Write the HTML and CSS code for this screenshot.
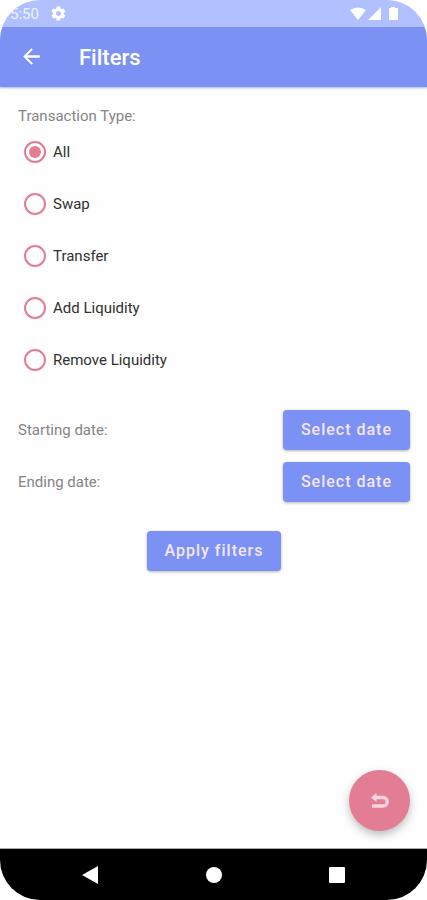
FILE: index.html
```html
<!DOCTYPE html>
<html lang="en">
<head>
<meta charset="utf-8">
<meta name="viewport" content="width=device-width, initial-scale=1">
<title>Filters</title>
<link rel="stylesheet" href="styles.css">
</head>
<body>
<div class="screen">
  <div class="status">
    <span class="time">5:50</span>
    <svg class="gear" viewBox="0 0 24 24" width="17" height="17" aria-hidden="true"><path fill="currentColor" fill-rule="evenodd" d="M19.4 13a7.500 7.500 0 0 0 0-2l2.100-1.600a.5.5 0 0 0 .1-.7l-2-3.400a.5.5 0 0 0-.6-.2l-2.500 1a7.300 7.300 0 0 0-1.700-1l-.4-2.600a.5.5 0 0 0-.5-.5h-4a.5.5 0 0 0-.5.500L9 5.100a7.700 7.700 0 0 0-1.700 1l-2.500-1a.5.5 0 0 0-.6.2l-2 3.400a.5.5 0 0 0 .1.700L4.500 11a8 8 0 0 0 0 2l-2.200 1.600a.5.5 0 0 0-.1.700l2 3.400c.1.200.4.300.6.200l2.500-1a7.300 7.300 0 0 0 1.700 1l.4 2.600c0 .3.200.5.500.5h4c.3 0 .5-.2.500-.5l.4-2.600a7.700 7.700 0 0 0 1.700-1l2.500 1c.2.100.5 0 .6-.2l2-3.400a.5.5 0 0 0-.1-.7zM12 15.500a3.500 3.500 0 1 1 0-7 3.500 3.500 0 0 1 0 7z"/></svg>
    <svg class="signals" viewBox="0 0 50 16" width="50" height="16" aria-hidden="true"><path fill="currentColor" d="M0 4Q8-1 16 4L8 14zM18 14L31 1V14zM39 2H41V1H45V2H48V14H39z"/></svg>
  </div>
  <header class="appbar">
    <button class="back" type="button" aria-label="Back">
      <svg viewBox="0 0 24 24" width="25" height="25" aria-hidden="true"><path fill="currentColor" d="M20 10.800H7.800l5.400-5.400L12 4l-8 8 8 8 1.400-1.400L7.800 13.200H20z"/></svg>
    </button>
    <h1>Filters</h1>
  </header>
  <main>
    <form class="filters">
      <fieldset>
        <legend>Transaction Type:</legend>
        <label class="option"><input type="radio" name="type" checked>All</label>
        <label class="option"><input type="radio" name="type">Swap</label>
        <label class="option"><input type="radio" name="type">Transfer</label>
        <label class="option"><input type="radio" name="type">Add Liquidity</label>
        <label class="option"><input type="radio" name="type">Remove Liquidity</label>
      </fieldset>
      <div class="date"><label for="start">Starting date:</label><button class="btn" id="start" type="button">Select date</button></div>
      <div class="date"><label for="end">Ending date:</label><button class="btn" id="end" type="button">Select date</button></div>
      <button class="btn apply" type="button">Apply filters</button>
    </form>
    <button class="fab" type="button" aria-label="Reset filters">
      <svg viewBox="0 0 20 18" width="20" height="18" aria-hidden="true"><path fill="none" stroke="currentColor" stroke-width="3.400" d="M5 5.500H13a4.200 4.200 0 0 1 0 8.500H2"/><path fill="currentColor" d="M1 5.500L6.500 1V10z"/></svg>
    </button>
  </main>
  <nav class="navbar">
    <button type="button" aria-label="Back"><svg viewBox="0 0 20 20" width="20" height="20"><path fill="currentColor" d="M1 10L17 1V19z"/></svg></button>
    <button type="button" aria-label="Home"><svg viewBox="0 0 20 20" width="20" height="20"><circle fill="currentColor" cx="10" cy="10" r="8"/></svg></button>
    <button type="button" aria-label="Recent apps"><svg viewBox="0 0 20 20" width="20" height="20"><rect fill="currentColor" x="2" y="2" width="16" height="16" rx="1"/></svg></button>
  </nav>
</div>
</body>
</html>
```
FILE: styles.css
```css
* { box-sizing: border-box; }
body {
  margin: 0;
  background: #fff;
  font-family: Roboto, "Liberation Sans", sans-serif;
  font-size: 15px;
  line-height: 20px;
}
button {
  margin: 0;
  padding: 0;
  border: 0;
  background: none;
  color: inherit;
  font: inherit;
}
svg { display: block; }
.screen {
  display: flex;
  flex-direction: column;
  min-height: 100vh;
  border-radius: 40px;
  overflow: hidden;
  background: #fefefe;
}
.status {
  display: flex;
  align-items: center;
  height: 27px;
  padding: 0 27px 0 10px;
  background: #b1c0ff;
  color: #fff;
}
.time { opacity: 0.8; }
.gear { margin-left: 11px; }
.signals { margin-left: auto; }
.appbar {
  display: flex;
  align-items: center;
  gap: 35px;
  height: 60px;
  padding: 2px 19px 0;
  background: #7c91f4;
  box-shadow: 0 1px 2px #7c91f4aa;
  color: #fff;
}
.back { margin-top: -3px; }
h1 {
  margin: 0;
  font-size: 22px;
  font-weight: 500;
  line-height: 28px;
}
main {
  display: flex;
  flex: 1;
  flex-direction: column;
  justify-content: space-between;
  padding: 19px 17px 17px 18px;
}
.filters {
  display: flex;
  flex-direction: column;
  color: #858585;
}
fieldset {
  display: flex;
  flex-direction: column;
  margin: 0 0 18px;
  padding: 0;
  border: 0;
}
legend { padding: 0; }
.option {
  display: flex;
  align-items: center;
  gap: 7px;
  height: 52px;
  padding-left: 6px;
  color: #303030;
}
input[type="radio"] {
  appearance: none;
  display: grid;
  place-items: center;
  width: 22px;
  height: 22px;
  margin: 0;
  border: 2px solid #e27d94;
  border-radius: 50%;
}
input[type="radio"]:checked::before {
  content: "";
  width: 12px;
  height: 12px;
  border-radius: 50%;
  background: #e27d94;
}
.date {
  display: flex;
  align-items: center;
  justify-content: space-between;
  height: 52px;
}
.btn {
  height: 40px;
  padding: 0 18px;
  border-radius: 4px;
  background: #7c91f4;
  box-shadow: 0 1px 3px #0000004d;
  color: #f5e6fa;
  font-size: 16px;
  font-weight: 500;
  letter-spacing: 1px;
}
.apply {
  align-self: center;
  margin-top: 23px;
}
.fab {
  display: grid;
  place-items: center;
  align-self: flex-end;
  width: 61px;
  height: 61px;
  border-radius: 50%;
  background: #e27d94;
  box-shadow: 0 4px 8px #00000040;
  color: #fad3e3;
}
.navbar {
  display: flex;
  align-items: center;
  justify-content: center;
  gap: 103px;
  height: 52px;
  border-top: 1px solid #aaa;
  background: #000;
  color: #fff;
}
```
